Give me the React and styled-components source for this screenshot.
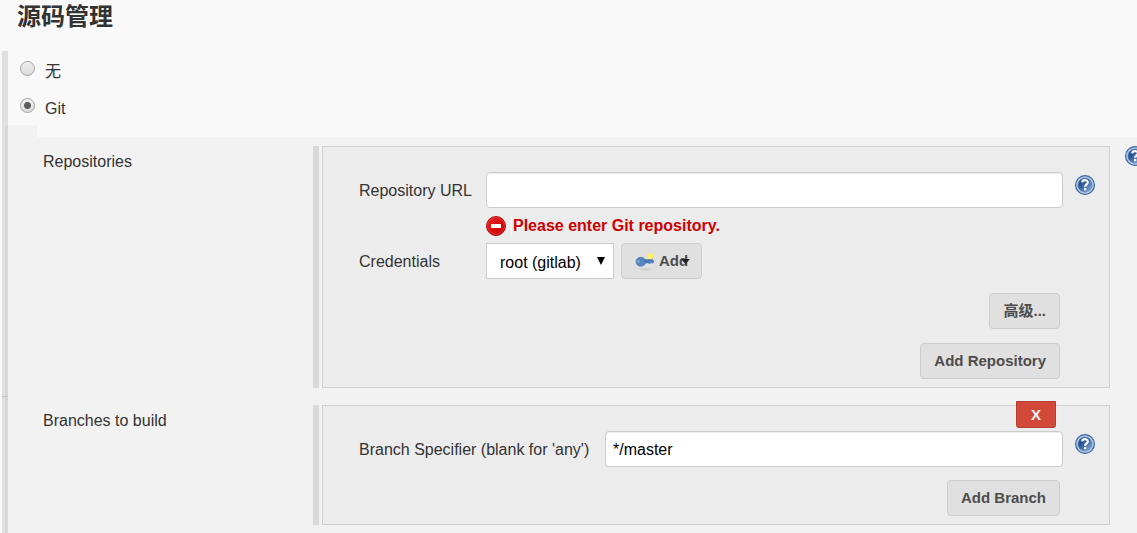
import React, { useState } from "react";
import styled, { createGlobalStyle } from "styled-components";

const GlobalStyle = createGlobalStyle`
  *, *::before, *::after { box-sizing: border-box; }
  body {
    margin: 0;
    background: #f9f9f9;
    color: #333;
    font: 16px/20px "Liberation Sans", "Noto Sans CJK SC", sans-serif;
    overflow-x: hidden;
  }
  button, input, select { font: inherit; }
`;

const Page = styled.main`
  display: flex;
  flex-direction: column;
  min-height: 100vh;
  overflow-x: hidden;
`;

const Heading = styled.h1`
  margin: 0 0 17px;
  padding-left: 17px;
  font-size: 24px;
  line-height: 34px;
`;

const Section = styled.form`
  display: flex;
  flex-direction: column;
  flex: 1;
  margin-left: 2px;
  border-left: 3px solid #e0e0e0;
`;

const Options = styled.div`
  border-left: 3px solid #e0e0e0;
`;

const Option = styled.label`
  display: flex;
  gap: 10px;
  height: 37px;
  padding: 10px 12px 0;
`;

const OptionText = styled.span`
  line-height: 22px;
`;

const Radio = styled.input.attrs({ type: "radio" })`
  appearance: none;
  width: 15px;
  height: 15px;
  margin: 0;
  border: 1px solid #a3a3a3;
  border-radius: 50%;
  background: linear-gradient(#eee, #dcdcdc);
  &:checked {
    background: radial-gradient(circle, #5c5c5c 0 3px, transparent 4px), linear-gradient(#eee, #dcdcdc);
  }
`;

const Settings = styled.div`
  flex: 1;
  border-left: 3px solid #d8d8d8;
  background: #f2f2f2;
`;

const Spacer = styled.div`
  height: 12px;
  margin-left: 29px;
  background: #f9f9f9;
`;

const Rows = styled.div`
  display: flex;
  flex-direction: column;
  gap: 17px;
  padding: 9px 0 8px 35px;
`;

const Row = styled.section`
  position: relative;
  display: grid;
  grid-template-columns: 270px minmax(0, 1fr) 27px;
`;

const DividerTick = styled.span`
  position: absolute;
  left: -41px;
  top: -9px;
  width: 6px;
  height: 1px;
  background: #c4c4c4;
`;

const RowTitle = styled.h2`
  margin: 0;
  padding-top: 6px;
  font-size: 16px;
  font-weight: 400;
  line-height: 20px;
`;

const Frame = styled.div`
  display: flex;
  gap: 3px;
  &::before {
    content: "";
    flex: 0 0 6px;
    background: #d9d9d9;
  }
`;

const Panel = styled.div`
  position: relative;
  flex: 1;
  min-width: 0;
  padding: 25px 14px 8px 36px;
  border: 1px solid #d0d0d0;
  background: #ececec;
`;

const Field = styled.div`
  display: grid;
  grid-template-columns: ${(p) => p.$label} minmax(0, 1fr) 20px;
  column-gap: 12px;
  align-items: center;
`;

const FieldLabel = styled.label`
  padding-top: 2px;
`;

const TextInput = styled.input.attrs({ type: "text" })`
  width: 100%;
  height: 36px;
  padding: 2px 7px 0;
  border: 1px solid #ccc;
  border-radius: 4px;
  background: #fff;
  color: #000;
  box-shadow: inset 0 1px 1px rgba(0, 0, 0, 0.075);
`;

const ErrorMessage = styled.p`
  display: flex;
  align-items: center;
  gap: 5px;
  grid-column: 2;
  height: 20px;
  margin: 8px 0 7px;
  color: #c00;
  font-weight: 700;
`;

const ErrorText = styled.span`
  padding-left: 1px;
  border-left: 1px solid #fafafa;
`;

const Controls = styled.div`
  display: flex;
  gap: 7px;
`;

const SelectWrap = styled.div`
  position: relative;
  width: 128px;
`;

const Select = styled.select`
  appearance: none;
  width: 100%;
  height: 36px;
  padding: 3px 13px 0;
  border: 1px solid #ccc;
  border-radius: 0;
  background: #fff;
  color: #000;
`;

const SelectArrow = styled.svg`
  position: absolute;
  right: 9px;
  top: 14px;
  pointer-events: none;
`;

const Button = styled.button.attrs({ type: "button" })`
  position: relative;
  display: flex;
  align-items: center;
  gap: 4px;
  height: 36px;
  padding: 0 13px;
  border: 1px solid #ccc;
  border-radius: 4px;
  background: #e0e0e0;
  color: #4d4d4d;
  font-size: 15px;
  font-weight: 700;
  white-space: nowrap;
`;

const AddArrow = styled.svg`
  position: absolute;
  right: 11px;
  top: 12px;
`;

const Actions = styled.div`
  display: flex;
  flex-direction: column;
  align-items: flex-end;
  gap: 14px;
  margin-top: ${(p) => p.$top};
  padding-right: 35px;
`;

const DeleteButton = styled.button.attrs({ type: "button" })`
  position: absolute;
  top: -5px;
  right: 53px;
  width: 40px;
  height: 27px;
  padding: 0;
  border: 1px solid #b73c2e;
  border-radius: 0 0 3px 3px;
  background: #d24939;
  color: #f5f5f5;
  font-size: 15px;
  font-weight: 700;
`;

const HelpLink = styled.a`
  display: block;
  width: 20px;
  height: 20px;
  margin-bottom: ${(p) => (p.$raised ? "10px" : "0")};
  margin-left: ${(p) => (p.$outer ? "15px" : "0")};
`;

function Help({ label, ...rest }) {
  return (
    <HelpLink href="#help" aria-label={label} {...rest}>
      <svg width="20" height="20" viewBox="0 0 20 20">
        <defs>
          <linearGradient id="helpFill" x1="0" y1="0" x2="1" y2="1">
            <stop offset="0.35" stopColor="#2a5596" />
            <stop offset="1" stopColor="#8fb3e0" />
          </linearGradient>
        </defs>
        <circle cx="10" cy="10" r="9.4" fill="#b9cbe3" stroke="#3a659f" strokeWidth="1.2" />
        <circle cx="10" cy="10" r="7.1" fill="url(#helpFill)" stroke="#6489bd" strokeWidth="0.6" />
        <path d="M7.2 7.4C7.4 4.3 13 4.4 12.8 7.5C12.7 9.3 10.2 9.5 10.1 11.8" fill="none" stroke="#fff" strokeWidth="2.1" />
        <rect x="9" y="13" width="2.3" height="2.3" fill="#fff" />
      </svg>
    </HelpLink>
  );
}

function ErrorIcon() {
  return (
    <svg width="20" height="20" viewBox="0 0 20 20" aria-hidden="true">
      <defs>
        <linearGradient id="errorFill" x1="0" y1="0" x2="1" y2="1">
          <stop offset="0" stopColor="#ee2020" />
          <stop offset="1" stopColor="#c60000" />
        </linearGradient>
      </defs>
      <circle cx="10" cy="10" r="9.5" fill="url(#errorFill)" stroke="#a81212" />
      <circle cx="10" cy="10" r="8.4" fill="none" stroke="#e84040" strokeWidth="0.7" />
      <rect x="5" y="8" width="10" height="4" rx="0.5" fill="#fff" />
    </svg>
  );
}

function KeyIcon() {
  return (
    <svg width="20" height="20" viewBox="0 0 20 20" aria-hidden="true">
      <defs>
        <radialGradient id="keyGlow">
          <stop offset="0.2" stopColor="#fdf65a" />
          <stop offset="0.7" stopColor="#f3ea74" />
          <stop offset="1" stopColor="#f3ea74" stopOpacity="0" />
        </radialGradient>
        <radialGradient id="keyShadow">
          <stop offset="0" stopColor="#c4c4c4" />
          <stop offset="1" stopColor="#c4c4c4" stopOpacity="0" />
        </radialGradient>
      </defs>
      <ellipse cx="10" cy="18.2" rx="8" ry="1.8" fill="url(#keyShadow)" />
      <circle cx="15.4" cy="5.4" r="4" fill="url(#keyGlow)" />
      <path d="M8 8.6H17.5L19 10L18 12.2L16.2 11.6L15 12.8L13 12H9Z" fill="#5b8cc8" stroke="#3465a4" strokeWidth="0.5" />
      <ellipse cx="5.8" cy="10.8" rx="4.8" ry="4.5" fill="#5586c2" stroke="#3f70ad" strokeWidth="0.6" />
      <path d="M9 10.1H17.5" stroke="#3465a4" strokeWidth="0.9" />
      <ellipse cx="3.6" cy="10.6" rx="1" ry="1.4" fill="#8fb2dc" />
    </svg>
  );
}

export default function App() {
  const [scm, setScm] = useState("git");
  return (
    <>
      <GlobalStyle />
      <Page>
        <Heading>源码管理</Heading>
        <Section>
          <Options>
            <Option>
              <Radio name="scm" checked={scm === "none"} onChange={() => setScm("none")} />
              <OptionText>无</OptionText>
            </Option>
            <Option>
              <Radio name="scm" checked={scm === "git"} onChange={() => setScm("git")} />
              <OptionText>Git</OptionText>
            </Option>
          </Options>
          <Settings>
            <Spacer />
            <Rows>
              <Row>
                <RowTitle>Repositories</RowTitle>
                <Frame>
                  <Panel>
                    <Field $label="115px">
                      <FieldLabel htmlFor="url">Repository URL</FieldLabel>
                      <TextInput id="url" />
                      <Help label="Help for Repository URL" $raised />
                      <ErrorMessage>
                        <ErrorIcon />
                        <ErrorText>Please enter Git repository.</ErrorText>
                      </ErrorMessage>
                    </Field>
                    <Field $label="115px">
                      <FieldLabel htmlFor="credentials">Credentials</FieldLabel>
                      <Controls>
                        <SelectWrap>
                          <Select id="credentials">
                            <option>root (gitlab)</option>
                          </Select>
                          <SelectArrow width="8" height="8" viewBox="0 0 8 8">
                            <path d="M0 0H8L4 8Z" fill="#000" />
                          </SelectArrow>
                        </SelectWrap>
                        <Button>
                          <KeyIcon />
                          <span>Add</span>
                          <AddArrow width="9" height="9" viewBox="0 0 9 9">
                            <path d="M0 3H9L4.5 8Z" fill="#222" />
                          </AddArrow>
                        </Button>
                      </Controls>
                    </Field>
                    <Actions $top="14px">
                      <Button>高级...</Button>
                      <Button>Add Repository</Button>
                    </Actions>
                  </Panel>
                </Frame>
                <Help label="Help for Repositories" $outer />
              </Row>
              <Row>
                <DividerTick />
                <RowTitle>Branches to build</RowTitle>
                <Frame>
                  <Panel>
                    <DeleteButton aria-label="Delete branch">X</DeleteButton>
                    <Field $label="234px">
                      <FieldLabel htmlFor="branch">Branch Specifier (blank for 'any')</FieldLabel>
                      <TextInput id="branch" defaultValue="*/master" />
                      <Help label="Help for Branch Specifier" $raised />
                    </Field>
                    <Actions $top="13px">
                      <Button>Add Branch</Button>
                    </Actions>
                  </Panel>
                </Frame>
              </Row>
            </Rows>
          </Settings>
        </Section>
      </Page>
    </>
  );
}
